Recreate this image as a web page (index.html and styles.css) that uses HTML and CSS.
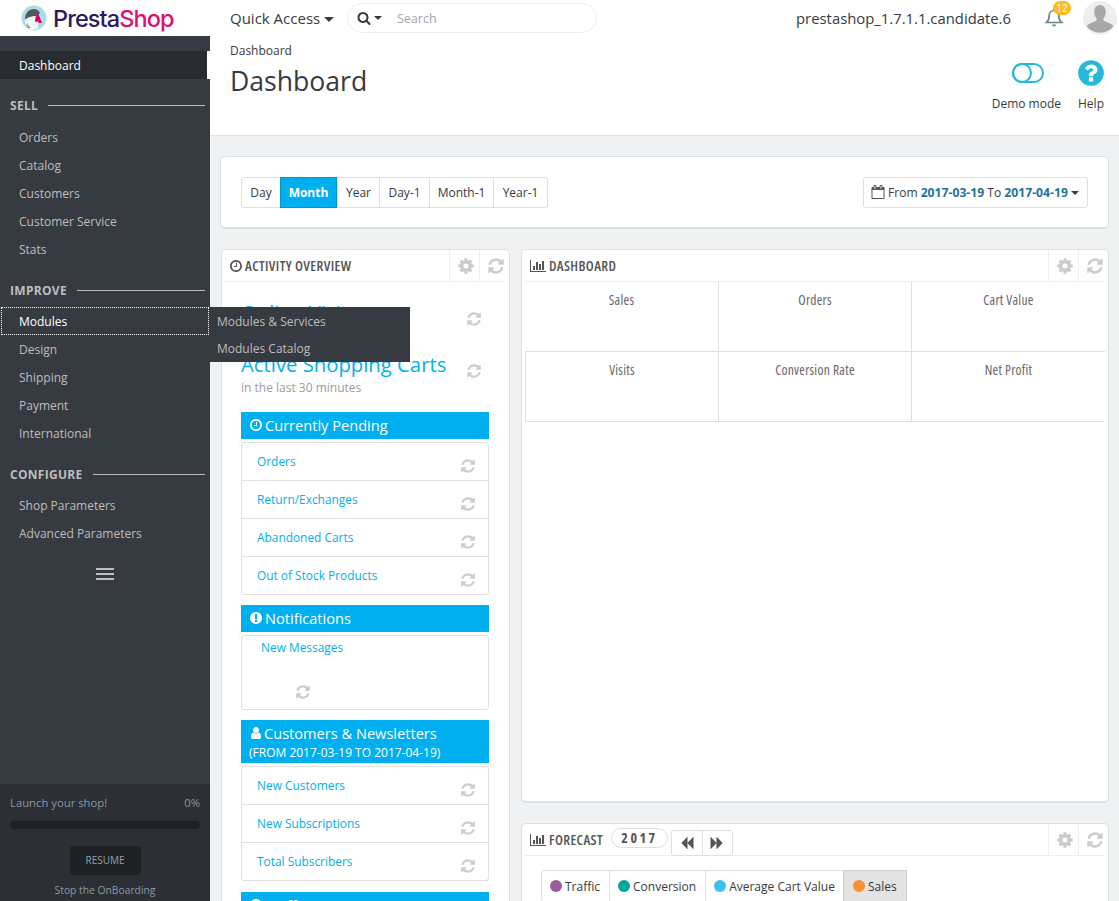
FILE: index.html
```html
<!DOCTYPE html>
<html lang="en">
  <head>
    <meta charset="UTF-8" />
    <title>Dashboard - PrestaShop</title>
    <link rel="stylesheet" href="styles.css">
  </head>
  <body>
    <svg class="icon-defs" xmlns="http://www.w3.org/2000/svg">
      <symbol id="i-refresh" viewBox="0 0 1792 1792"><path d="M1639 1056q0 5-1 7-64 268-268 434.5t-478 166.5q-146 0-282.5-55t-243.5-157l-129 129q-19 19-45 19t-45-19-19-45v-448q0-26 19-45t45-19h448q26 0 45 19t19 45-19 45l-137 137q71 66 161 102t187 36q134 0 250-65t186-179q11-17 53-117 8-23 30-23h192q13 0 22.5 9.5t9.5 22.5zm25-800v448q0 26-19 45t-45 19h-448q-26 0-45-19t-19-45 19-45l138-138q-148-137-349-137-134 0-250 65t-186 179q-11 17-53 117-8 23-30 23h-199q-13 0-22.5-9.5t-9.5-22.5v-7q65-268 270-434.5t480-166.5q146 0 284 55.5t245 156.5l130-129q19-19 45-19t45 19 19 45z"/></symbol>
      <symbol id="i-cog" viewBox="0 0 1792 1792"><path d="M1152 896q0-106-75-181t-181-75-181 75-75 181 75 181 181 75 181-75 75-181zm512-109v222q0 12-8 23t-20 13l-185 28q-19 54-39 91 35 50 107 138 10 12 10 25t-9 23q-27 37-99 108t-94 71q-12 0-26-9l-138-108q-44 23-91 38-16 136-29 186-7 28-36 28h-222q-14 0-24.5-8.5t-11.5-21.5l-28-184q-49-16-90-37l-141 107q-10 9-25 9-14 0-25-11-126-114-165-168-7-10-7-23 0-12 8-23 15-21 51-66.5t54-70.5q-27-50-41-99l-183-27q-13-2-21-12.5t-8-23.5v-222q0-12 8-23t19-13l186-28q14-46 39-92-40-57-107-138-10-12-10-24 0-10 9-23 26-36 98.5-107.5t94.5-71.5q13 0 26 10l138 107q44-23 91-38 16-136 29-186 7-28 36-28h222q14 0 24.5 8.5t11.5 21.5l28 184q49 16 90 37l142-107q9-9 24-9 13 0 25 10 129 119 165 170 7 8 7 22 0 12-8 23-15 21-51 66.5t-54 70.5q26 50 41 98l183 28q13 2 21 12.5t8 23.5z"/></symbol>
      <symbol id="i-chart" viewBox="0 0 2048 1792"><path d="M640 896v512h-256v-512h256zm384-512v1024h-256v-1024h256zm1024 1152v128h-2048v-1536h128v1408h1920zm-640-896v768h-256v-768h256zm384-384v1152h-256v-1152h256z"/></symbol>
      <symbol id="i-clock" viewBox="0 0 1792 1792"><path d="M1024 544v448q0 14-9 23t-23 9h-320q-14 0-23-9t-9-23v-64q0-14 9-23t23-9h224v-352q0-14 9-23t23-9h64q14 0 23 9t9 23zm416 352q0-148-73-273t-198-198-273-73-273 73-198 198-73 273 73 273 198 198 273 73 273-73 198-198 73-273zm224 0q0 209-103 385.5t-279.5 279.5-385.5 103-385.5-103-279.5-279.5-103-385.5 103-385.5 279.5-279.5 385.5-103 385.5 103 279.5 279.5 103 385.5z"/></symbol>
      <symbol id="i-alert" viewBox="0 0 1792 1792"><path d="M896 128q209 0 385.5 103t279.5 279.5 103 385.5-103 385.5-279.5 279.5-385.5 103-385.5-103-279.5-279.5-103-385.5 103-385.5 279.5-279.5 385.5-103zm128 1247v-190q0-14-9-23.5t-22-9.5h-192q-13 0-23 10t-10 23v190q0 13 10 23t23 10h192q13 0 22-9.5t9-23.5zm-2-344l18-621q0-12-10-18-10-8-24-8h-220q-14 0-24 8-10 6-10 18l17 621q0 10 10 17.5t24 7.5h185q14 0 23.5-7.5t10.5-17.5z"/></symbol>
      <symbol id="i-user" viewBox="0 0 1792 1792"><path d="M1536 1399q0 109-62.5 187t-150.5 78h-854q-88 0-150.5-78t-62.5-187q0-85 8.5-160.5t31.5-152 58.5-131 94-89 134.5-34.5q131 128 313 128t313-128q76 0 134.5 34.5t94 89 58.5 131 31.5 152 8.5 160.5zm-256-887q0 159-112.5 271.5t-271.5 112.5-271.5-112.5-112.5-271.5 112.5-271.5 271.5-112.5 271.5 112.5 112.5 271.5z"/></symbol>
      <symbol id="i-search" viewBox="0 0 1792 1792"><path d="M1216 832q0-185-131.5-316.5t-316.5-131.5-316.5 131.5-131.5 316.5 131.5 316.5 316.5 131.5 316.5-131.5 131.5-316.5zm512 832q0 52-38 90t-90 38q-54 0-90-38l-343-342q-179 124-399 124-143 0-273.5-55.5t-225-150-150-225-55.5-273.5 55.5-273.5 150-225 225-150 273.5-55.5 273.5 55.5 225 150 150 225 55.5 273.5q0 220-124 399l343 343q37 37 37 90z"/></symbol>
      <symbol id="i-help" viewBox="0 0 1792 1792"><path d="M1024 1376v-192q0-14-9-23t-23-9h-192q-14 0-23 9t-9 23v192q0 14 9 23t23 9h192q14 0 23-9t9-23zm256-672q0-88-55.5-163t-138.5-116-170-41q-243 0-371 213-15 24 8 42l132 100q7 6 19 6 16 0 25-12 53-68 86-92 34-24 86-24 48 0 85.5 26t37.5 59q0 38-20 61t-68 45q-63 28-115.5 86.5t-52.5 125.5v36q0 14 9 23t23 9h192q14 0 23-9t9-23q0-19 21.5-49.5t54.5-49.5q32-18 49-28.5t46-35 44.5-48 28-60.5 12.5-81zm384 192q0 209-103 385.5t-279.5 279.5-385.5 103-385.5-103-279.5-279.5-103-385.5 103-385.5 279.5-279.5 385.5-103 385.5 103 279.5 279.5 103 385.5z"/></symbol>
      <symbol id="i-back" viewBox="0 0 1792 1792"><path d="M1683 141q19-19 32-13t13 32v1472q0 26-13 32t-32-13l-710-710q-9-9-13-19v710q0 26-13 32t-32-13l-710-710q-19-19-19-45t19-45l710-710q19-19 32-13t13 32v710q4-10 13-19z"/></symbol>
      <symbol id="i-next" viewBox="0 0 1792 1792"><path d="M109 1651q-19 19-32 13t-13-32v-1472q0-26 13-32t32 13l710 710q9 9 13 19v-710q0-26 13-32t32 13l710 710q19 19 19 45t-19 45l-710 710q-19 19-32 13t-13-32v-710q-4 10-13 19z"/></symbol>
      <symbol id="i-cal" viewBox="0 0 1792 1792"><path d="M192 1664h1408v-1024h-1408v1024zm384-1216v-288q0-14-9-23t-23-9h-64q-14 0-23 9t-9 23v288q0 14 9 23t23 9h64q14 0 23-9t9-23zm768 0v-288q0-14-9-23t-23-9h-64q-14 0-23 9t-9 23v288q0 14 9 23t23 9h64q14 0 23-9t9-23zm384-64v1280q0 52-38 90t-90 38h-1408q-52 0-90-38t-38-90v-1280q0-52 38-90t90-38h128v-96q0-66 47-113t113-47h64q66 0 113 47t47 113v96h384v-96q0-66 47-113t113-47h64q66 0 113 47t47 113v96h128q52 0 90 38t38 90z"/></symbol>
    </svg>

    <header class="topbar">
      <a class="logo">
        <svg class="logo-bird" viewBox="0 0 26 26">
          <circle cx="13" cy="13" r="12.500" fill="#a8dce6"/>
          <path d="M4 14c0-6 4-10 9-10 3 0 5 2 6 4l-3 3-6 2-6 1z" fill="#55585f"/>
          <path d="M4 15c2-2 6-4 11-4 3 3 3 9 1 13-3 1-7 1-9-1-2-2-3-5-3-8z" fill="#f4f5f5"/>
          <path d="M6 18c1 2 2 4 4 5l-3 0c-1-1-2-3-1-5z" fill="#8b8d92"/>
          <path d="M14.500 12l3-3 1.500 4 2 5-3 0-1-1.500-3 .5z" fill="#df0067"/>
        </svg>
        <span class="logo-text">Presta<span class="logo-pink">Shop</span></span>
      </a>
      <div class="quick-access">Quick Access <span class="caret"></span></div>
      <div class="search-box">
        <svg class="search-icon"><use href="#i-search"/></svg>
        <span class="caret caret-small"></span>
        <span class="search-text">Search</span>
      </div>
      <div class="shop-name">prestashop_1.7.1.1.candidate.6</div>
      <div class="bell">
        <svg viewBox="0 0 20 20" class="bell-icon">
          <path d="M10 2.500c-3 0-4.800 2.300-4.800 5 0 4-1 5.500-2.700 7h15c-1.700-1.500-2.700-3-2.700-7 0-2.700-1.800-5-4.800-5z" fill="none" stroke="#6c868e" stroke-width="1.700"/>
          <path d="M8 16.500h4c0 1-1 2-2 2s-2-1-2-2z" fill="#6c868e"/>
          <rect x="9" y="1" width="2" height="2" fill="#6c868e"/>
        </svg>
        <span class="bell-badge">12</span>
      </div>
      <div class="avatar">
        <svg viewBox="0 0 34 34">
          <circle cx="17" cy="17" r="17" fill="#eeeeee"/>
          <path d="M17 4c3.800 0 5.800 3 5.800 6.500 0 3-1 5.500-2.300 7-.6 1 0 2 1.500 2.800 3 1.300 6.500 2.500 8.500 4.700a17 17 0 0 1-27 0c2-2.200 5.500-3.400 8.500-4.700 1.500-.8 2.100-1.800 1.500-2.800-1.300-1.500-2.300-4-2.300-7C11.200 7 13.200 4 17 4z" fill="#a8a8a8"/>
        </svg>
      </div>
    </header>

    <div class="layout">
      <nav class="sidebar">
        <a class="nav-item nav-active">Dashboard</a>

        <div class="nav-title">Sell</div>
        <a class="nav-item">Orders</a>
        <a class="nav-item">Catalog</a>
        <a class="nav-item">Customers</a>
        <a class="nav-item">Customer Service</a>
        <a class="nav-item">Stats</a>

        <div class="nav-title">Improve</div>
        <a class="nav-item nav-focus">Modules</a>
        <a class="nav-item">Design</a>
        <a class="nav-item">Shipping</a>
        <a class="nav-item">Payment</a>
        <a class="nav-item">International</a>

        <div class="nav-title">Configure</div>
        <a class="nav-item">Shop Parameters</a>
        <a class="nav-item">Advanced Parameters</a>

        <div class="nav-collapse"><span></span><span></span><span></span></div>

        <div class="onboarding">
          <div class="onboarding-row"><span>Launch your shop!</span><span>0%</span></div>
          <div class="onboarding-bar"></div>
          <a class="resume-btn">RESUME</a>
          <a class="onboarding-stop">Stop the OnBoarding</a>
        </div>

        <div class="submenu">
          <a>Modules &amp; Services</a>
          <a>Modules Catalog</a>
        </div>
      </nav>

      <div class="content">
        <div class="page-head">
          <div>
            <div class="breadcrumb">Dashboard</div>
            <h1 class="page-title">Dashboard</h1>
          </div>
          <div class="toolbar">
            <div class="tool">
              <span class="tool-icon">
                <span class="demo-switch"><span class="demo-knob"></span></span>
              </span>
              Demo mode
            </div>
            <div class="tool">
              <span class="tool-icon"><svg class="help-icon"><use href="#i-help"/></svg></span>
              Help
            </div>
          </div>
        </div>

        <div class="main">
          <div class="card range-card">
            <div class="btn-group">
              <a>Day</a>
              <a class="selected">Month</a>
              <a>Year</a>
              <a>Day-1</a>
              <a>Month-1</a>
              <a>Year-1</a>
            </div>
            <a class="date-picker">
              <svg class="cal-icon"><use href="#i-cal"/></svg>
              From <b>2017-03-19</b> To <b>2017-04-19</b>
              <span class="caret caret-date"></span>
            </a>
          </div>

          <div class="columns">
            <div class="col-left">
              <section class="card panel">
                <div class="panel-head">
                  <svg class="head-icon"><use href="#i-clock"/></svg>
                  <span class="panel-title">Activity overview</span>
                  <span class="head-btn"><svg><use href="#i-cog"/></svg></span>
                  <span class="head-btn"><svg><use href="#i-refresh"/></svg></span>
                </div>
                <div class="activity">
                  <div class="stat-line">
                    <div>
                      <div class="stat-title">Online Visitors</div>
                      <div class="stat-sub">in the last 30 minutes</div>
                    </div>
                    <svg class="spin"><use href="#i-refresh"/></svg>
                  </div>
                  <div class="stat-line">
                    <div>
                      <div class="stat-title">Active Shopping Carts</div>
                      <div class="stat-sub">in the last 30 minutes</div>
                    </div>
                    <svg class="spin"><use href="#i-refresh"/></svg>
                  </div>

                  <h3 class="band"><svg><use href="#i-clock"/></svg>Currently Pending</h3>
                  <ul class="list">
                    <li><a>Orders</a><svg class="spin"><use href="#i-refresh"/></svg></li>
                    <li><a>Return/Exchanges</a><svg class="spin"><use href="#i-refresh"/></svg></li>
                    <li><a>Abandoned Carts</a><svg class="spin"><use href="#i-refresh"/></svg></li>
                    <li><a>Out of Stock Products</a><svg class="spin"><use href="#i-refresh"/></svg></li>
                  </ul>

                  <h3 class="band"><svg><use href="#i-alert"/></svg>Notifications</h3>
                  <div class="messages">
                    <a>New Messages</a>
                    <svg class="spin"><use href="#i-refresh"/></svg>
                  </div>

                  <h3 class="band band-tall">
                    <svg><use href="#i-user"/></svg>Customers &amp; Newsletters
                    <small>(FROM 2017-03-19 TO 2017-04-19)</small>
                  </h3>
                  <ul class="list list-last">
                    <li><a>New Customers</a><svg class="spin"><use href="#i-refresh"/></svg></li>
                    <li><a>New Subscriptions</a><svg class="spin"><use href="#i-refresh"/></svg></li>
                    <li><a>Total Subscribers</a><svg class="spin"><use href="#i-refresh"/></svg></li>
                  </ul>

                  <h3 class="band"><svg><use href="#i-clock"/></svg>Traffic</h3>
                </div>
              </section>
            </div>

            <div class="col-right">
              <section class="card panel dash-panel">
                <div class="panel-head">
                  <svg class="head-icon head-chart"><use href="#i-chart"/></svg>
                  <span class="panel-title">Dashboard</span>
                  <span class="head-btn"><svg><use href="#i-cog"/></svg></span>
                  <span class="head-btn"><svg><use href="#i-refresh"/></svg></span>
                </div>
                <div class="kpis">
                  <div class="kpi">Sales</div>
                  <div class="kpi">Orders</div>
                  <div class="kpi">Cart Value</div>
                  <div class="kpi">Visits</div>
                  <div class="kpi">Conversion Rate</div>
                  <div class="kpi">Net Profit</div>
                </div>
              </section>

              <section class="card panel forecast-panel">
                <div class="panel-head">
                  <svg class="head-icon head-chart"><use href="#i-chart"/></svg>
                  <span class="panel-title forecast-title">Forecast</span>
                  <span class="year-pill">2017</span>
                  <span class="year-nav">
                    <a><svg><use href="#i-back"/></svg></a>
                    <a><svg><use href="#i-next"/></svg></a>
                  </span>
                  <span class="head-btn"><svg><use href="#i-cog"/></svg></span>
                  <span class="head-btn"><svg><use href="#i-refresh"/></svg></span>
                </div>
                <div class="legend">
                  <a><i class="dot dot-traffic"></i>Traffic</a>
                  <a><i class="dot dot-conversion"></i>Conversion</a>
                  <a><i class="dot dot-cart"></i>Average Cart Value</a>
                  <a class="legend-on"><i class="dot dot-sales"></i>Sales</a>
                </div>
              </section>
            </div>
          </div>
        </div>
      </div>
    </div>
  </body>
</html>
```

FILE: styles.css
```css
* {
  box-sizing: border-box;
}

html,
body {
  height: 100%;
  margin: 0;
  overflow: hidden;
}

body {
  display: flex;
  flex-direction: column;
  font-family: "Open Sans", sans-serif;
  font-size: 12px;
  color: #363a41;
  background-color: #eff1f2;
}

ul {
  list-style: none;
  margin: 0;
  padding: 0;
}

.icon-defs {
  display: none;
}

/* top bar */
.topbar {
  flex: none;
  display: flex;
  align-items: center;
  height: 36px;
  background-color: #ffffff;
}

.logo {
  display: flex;
  align-items: center;
  width: 230px;
  padding-left: 21px;
}

.logo-bird {
  width: 26px;
  height: 26px;
  margin-right: 6px;
}

.logo-text {
  font-family: "Inter", sans-serif;
  font-size: 23.5px;
  font-weight: 500;
  letter-spacing: -0.9px;
  color: #2b1a5c;
}

.logo-pink {
  color: #df0f6e;
}

.quick-access {
  width: 117px;
  font-size: 15px;
}

.caret {
  display: inline-block;
  border-top: 5px solid #363a41;
  border-left: 5px solid transparent;
  border-right: 5px solid transparent;
  vertical-align: 2px;
}

.caret-small {
  border-top-width: 4px;
  border-left-width: 4px;
  border-right-width: 4px;
  margin-left: 3px;
  vertical-align: 0;
}

.caret-date {
  border-top-width: 4px;
  border-left-width: 4px;
  border-right-width: 4px;
}

.search-box {
  display: flex;
  align-items: center;
  width: 250px;
  height: 30px;
  padding-left: 9px;
  border: 1px solid #eeeeee;
  border-radius: 15px;
}

.search-icon {
  width: 14px;
  height: 14px;
  fill: #363a41;
}

.search-text {
  margin: 1px 0 0 15px;
  font-size: 12.5px;
  color: #a0a5aa;
}

.shop-name {
  margin-left: auto;
  font-size: 14.85px;
}

.bell {
  position: relative;
  width: 20px;
  height: 20px;
  margin-left: 33px;
}

.bell-icon {
  width: 20px;
  height: 20px;
}

.bell-badge {
  position: absolute;
  top: -7px;
  left: 9px;
  width: 18px;
  height: 14px;
  border-radius: 7px;
  background-color: #fbbb22;
  color: #ffffff;
  font-size: 10px;
  line-height: 14px;
  text-align: center;
}

.avatar {
  width: 34px;
  height: 36px;
  margin-left: 19px;
  margin-right: 2px;
}

.avatar svg {
  display: block;
  width: 34px;
  height: 36px;
}

/* page */
.layout {
  flex: 1;
  display: flex;
  min-height: 0;
}

.sidebar {
  position: relative;
  flex: none;
  display: flex;
  flex-direction: column;
  width: 210px;
  padding-top: 15px;
  background-color: #363a41;
}

.nav-item {
  display: block;
  height: 28px;
  padding-left: 19px;
  line-height: 30px;
  color: #bebebe;
}

.nav-active {
  width: 207px;
  margin-bottom: -1px;
  background-color: #282b30;
  box-shadow: 3px 0 0 #ffffff;
  color: #ffffff;
}

.nav-focus {
  margin-left: 1px;
  padding-left: 18px;
  width: 208px;
  outline: 1px dotted #ffffff;
  outline-offset: -1px;
  color: #ffffff;
}

.nav-title {
  display: flex;
  align-items: center;
  height: 26px;
  margin-top: 14px;
  margin-bottom: 4px;
  padding: 0 5px 0 10px;
  color: #bebebe;
  font-weight: 700;
  text-transform: uppercase;
  letter-spacing: 0.3px;
}

.nav-active + .nav-title {
  margin-bottom: 5px;
}

.nav-title::after {
  content: "";
  flex: 1;
  height: 1px;
  margin-left: 10px;
  background-color: #bebebe;
}

.nav-collapse {
  display: flex;
  flex-direction: column;
  gap: 3px;
  width: 18px;
  margin: 21px 0 0 96px;
}

.nav-collapse span {
  height: 2px;
  background-color: #bebebe;
}

.onboarding {
  margin-top: auto;
  height: 117px;
  padding: 11px 10px 0;
  background-color: #2c2f36;
  color: #8a99a2;
  font-size: 11.300px;
  text-align: center;
}

.onboarding-row {
  display: flex;
  justify-content: space-between;
  line-height: 15px;
}

.onboarding-bar {
  height: 8px;
  margin-top: 11px;
  border-radius: 4px;
  background-color: #1f2125;
}

.resume-btn {
  display: block;
  width: 71px;
  height: 29px;
  margin: 17px auto 0;
  border-radius: 3px;
  background-color: #1f2125;
  color: #8fa1ad;
  font-size: 10px;
  line-height: 29px;
}

.onboarding-stop {
  display: block;
  margin-top: 8px;
  font-size: 10.300px;
  line-height: 14px;
}

.submenu {
  position: absolute;
  top: 271px;
  left: 210px;
  z-index: 5;
  width: 200px;
  height: 55px;
  background-color: #363a41;
}

.submenu a {
  display: block;
  height: 27px;
  padding-left: 7px;
  line-height: 29px;
  color: #bebebe;
}

.content {
  flex: 1;
  min-width: 0;
}

.page-head {
  display: flex;
  justify-content: space-between;
  height: 100px;
  padding: 7px 15px 0 20px;
  background-color: #ffffff;
  border-bottom: 1px solid #dfdfdf;
}

.breadcrumb {
  line-height: 16px;
}

.page-title {
  margin: 4px 0 0;
  font-size: 26.600px;
  font-weight: 400;
  line-height: 36px;
}

.toolbar {
  display: flex;
  gap: 17px;
  padding-top: 15px;
}

.tool {
  display: flex;
  flex-direction: column;
  align-items: center;
}

.tool-icon {
  display: flex;
  align-items: center;
  height: 30px;
  margin-bottom: 7px;
}

.demo-switch {
  display: flex;
  width: 32px;
  height: 20px;
  margin-left: 3px;
  border: 2px solid #25b9d7;
  border-radius: 10px;
}

.demo-knob {
  width: 20px;
  height: 20px;
  margin: -2px;
  border: 2px solid #25b9d7;
  border-radius: 50%;
}

.help-icon {
  width: 30px;
  height: 30px;
  margin: 0 -2px;
  fill: #25b9d7;
}

.main {
  padding: 20px 10px 0;
}

.card {
  background-color: #ffffff;
  border: 1px solid #dbe0e3;
  border-bottom-width: 2px;
  border-radius: 5px;
}

.range-card {
  display: flex;
  justify-content: space-between;
  align-items: center;
  height: 73px;
  padding: 0 20px;
}

.btn-group {
  display: grid;
  grid-template-columns: 38px 57px 42px 50px 64px 54px;
  height: 31px;
  border: 1px solid #dfdfdf;
  border-radius: 3px;
  text-align: center;
}

.btn-group a {
  line-height: 29px;
  border-left: 1px solid #dfdfdf;
}

.btn-group a:first-child {
  border-left: 0;
}

.btn-group .selected {
  margin: -1px 0;
  height: 31px;
  line-height: 29px;
  border: 1px solid #0296cc;
  background-color: #00aff0;
  color: #ffffff;
  font-weight: 700;
}

.date-picker {
  display: block;
  height: 31px;
  padding: 0 8px 0 7px;
  border: 1px solid #dfdfdf;
  border-radius: 3px;
  line-height: 29px;
  white-space: nowrap;
}

.date-picker b {
  font-size: 12.2px;
  color: #25729a;
}

.cal-icon {
  width: 14px;
  height: 14px;
  vertical-align: -2px;
  fill: #555555;
}

.columns {
  display: flex;
  gap: 11px;
  margin-top: 20px;
  margin-left: 1px;
}

.col-left {
  flex: none;
  width: 289px;
}

.col-right {
  flex: 1;
  min-width: 0;
}

.panel {
  padding: 0 4px 0 3px;
}

.panel-head {
  display: flex;
  align-items: center;
  height: 32px;
  border-bottom: 1px solid #eeeeee;
}

.head-icon {
  flex: none;
  width: 14px;
  height: 14px;
  margin-left: 4px;
  margin-right: 2px;
  fill: #555555;
}

.head-chart {
  width: 16px;
  margin-left: 5px;
  margin-right: 3px;
}

.panel-title {
  font-size: 14px;
  font-weight: 600;
  font-stretch: 75%;
  letter-spacing: 0.38px;
  text-transform: uppercase;
  color: #555555;
  margin-right: auto;
}

.head-btn {
  display: flex;
  align-items: center;
  flex: none;
  width: 30px;
  height: 31px;
  padding-left: 7px;
  border-left: 1px solid #eeeeee;
}

.head-btn:last-child {
  margin-right: -4px;
}

.head-btn svg {
  width: 18px;
  height: 18px;
  fill: #cccccc;
}

.activity {
  padding: 15px 16px 0;
}

.stat-line {
  display: flex;
  justify-content: space-between;
  height: 52px;
  padding: 2px 7px 0 0;
}

.stat-title {
  font-size: 20.300px;
  line-height: 26px;
  color: #00aff0;
}

.stat-sub {
  margin-top: 2px;
  line-height: 18px;
  color: #a59a9a;
}

.spin {
  flex: none;
  width: 16px;
  height: 16px;
  fill: #cccccc;
}

.stat-line .spin {
  margin-top: 12px;
}

.band {
  display: flex;
  flex-wrap: wrap;
  align-items: center;
  height: 27px;
  margin: 0;
  padding: 0 0 2px 8px;
  background-color: #00aff0;
  color: #ffffff;
  font-size: 14.600px;
  font-weight: 400;
}

.band svg {
  width: 14px;
  height: 14px;
  margin-right: 2px;
  fill: #ffffff;
}

.band-tall {
  height: 43px;
  padding-bottom: 0;
  align-content: center;
  row-gap: 3px;
}

.band-tall svg {
  margin-right: 1px;
}

.band small {
  width: 100%;
  font-size: 12px;
  line-height: 14px;
}

.stat-line + .band {
  margin-top: 11px;
}

.list {
  margin: 3px 0 10px;
  border: 1px solid #dfdfdf;
  border-radius: 3px;
}

.list-last {
  margin-bottom: 11px;
}

.list li {
  display: flex;
  align-items: center;
  justify-content: space-between;
  height: 38px;
  padding: 0 12px 0 15px;
  border-top: 1px solid #dfdfdf;
}

.list li:first-child {
  border-top: 0;
  height: 37px;
}

.list a,
.messages a {
  font-size: 11.9px;
  color: #00aff0;
}

.list a {
  margin-bottom: 2px;
}

.list .spin {
  margin-top: 8px;
}

.messages {
  position: relative;
  height: 75px;
  margin: 3px 0 10px;
  padding: 3px 19px;
  border: 1px solid #dfdfdf;
  border-radius: 3px;
}

.messages .spin {
  position: absolute;
  left: 53px;
  bottom: 9px;
}

.dash-panel {
  height: 554px;
}

.kpis {
  display: grid;
  grid-template-columns: 193px 193px 194px;
  grid-template-rows: 69px 70px;
  border-bottom: 1px solid #dfdfdf;
}

.kpi {
  padding-top: 9px;
  font-size: 13.500px;
  font-stretch: 75%;
  letter-spacing: 0.3px;
  color: #666666;
  text-align: center;
  border-left: 1px solid #dfdfdf;
}

.kpi:nth-child(3n + 1) {
  border-left: 0;
}

.kpi:nth-child(n + 4) {
  border-top: 1px solid #dfdfdf;
}

.kpi:nth-child(4) {
  border-left: 1px solid #dfdfdf;
}

.forecast-panel {
  height: 90px;
  margin-top: 20px;
}

.forecast-title {
  margin-right: 0;
}

.year-pill {
  width: 57px;
  height: 20px;
  margin: -3px 0 0 8px;
  border: 1px solid #dfdfdf;
  border-radius: 10px;
  font-size: 14px;
  font-weight: 700;
  font-stretch: 75%;
  letter-spacing: 2.500px;
  line-height: 18px;
  text-align: center;
  color: #555555;
}

.year-nav {
  display: flex;
  align-self: flex-end;
  height: 26px;
  margin-left: 3px;
  margin-right: auto;
  margin-bottom: -1px;
  border: 1px solid #dfdfdf;
  border-radius: 3px;
}

.year-nav a {
  display: flex;
  align-items: center;
  justify-content: center;
  width: 30px;
}

.year-nav a + a {
  border-left: 1px solid #dfdfdf;
}

.year-nav svg {
  width: 14px;
  height: 14px;
  fill: #555555;
}

.legend {
  display: inline-flex;
  margin: 14px 0 0 16px;
  border: 1px solid #dfdfdf;
  border-radius: 3px;
}

.legend a {
  display: flex;
  align-items: center;
  height: 30px;
  padding: 0 9px 0 8px;
  border-left: 1px solid #dfdfdf;
}

.legend a:first-child {
  border-left: 0;
}

.legend-on {
  background-color: #e3e3e3;
  box-shadow: 0 0 0 1px #cfcfcf;
}

.dot {
  width: 12px;
  height: 12px;
  margin-right: 3px;
  border-radius: 50%;
}

.dot-traffic {
  background-color: #9e5ba1;
}

.dot-conversion {
  background-color: #00a89c;
}

.dot-cart {
  background-color: #3ac4ed;
}

.dot-sales {
  background-color: #f99031;
}
```
